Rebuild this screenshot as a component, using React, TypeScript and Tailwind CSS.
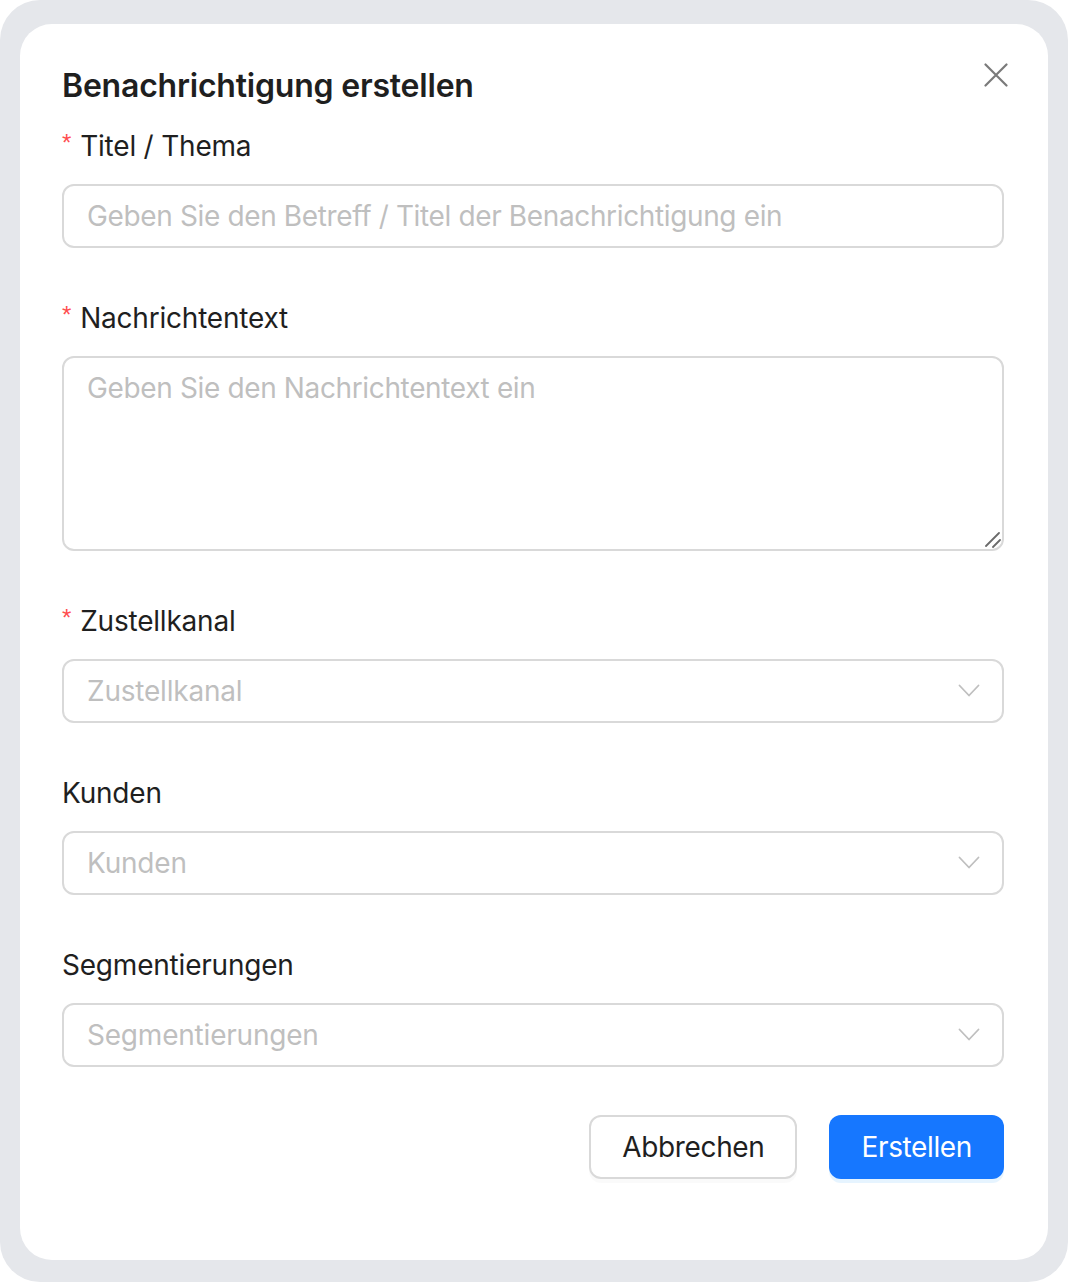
import React from "react";

const font = { fontFamily: 'Inter, "Noto Sans", "Liberation Sans", sans-serif' };

const Chevron = () => (
  <svg width="22" height="14" viewBox="0 0 22 14" fill="none" className="shrink-0">
    <path d="M1.5 1.5 L11 11.5 L20.5 1.5" stroke="#bfbfbf" strokeWidth="1.8" strokeLinecap="round" strokeLinejoin="round" />
  </svg>
);

const Label = ({ text, required }: { text: string; required?: boolean }) => (
  <div className="flex items-center h-[44px] mb-[16px] text-[28px] leading-[44px] text-[#1f1f1f]">
    {required && (
      <span className="text-[#ff4d4f] text-[24px] leading-none mr-[9px] -mt-[6px]" style={{ fontFamily: '"Liberation Sans", sans-serif' }}>
        *
      </span>
    )}
    {text}
  </div>
);

const SelectBox = ({ placeholder }: { placeholder: string }) => (
  <div className="flex items-center justify-between h-[64px] border-2 border-[#d9d9d9] rounded-[12px] pl-[23px] pr-[22px]">
    <span className="text-[28px] text-[#bfbfbf]">{placeholder}</span>
    <Chevron />
  </div>
);

export default function App() {
  return (
    <div className="w-[1068px] h-[1282px] bg-white tracking-[-0.013em]" style={font}>
      <div className="w-full h-full bg-[#e5e7eb] rounded-[40px] pl-[20px] pr-[20px] pt-[24px] pb-[22px]">
        <div className="relative h-full bg-white rounded-[32px] pl-[42px] pr-[44px] pt-[38px]">
          <button className="absolute right-[40px] top-[39px] w-[24px] h-[24px] flex items-center justify-center" aria-label="Schließen">
            <svg width="24" height="24" viewBox="0 0 24 24" fill="none">
              <path d="M1.5 1.5 L22.5 22.5 M22.5 1.5 L1.5 22.5" stroke="#7a7a7a" strokeWidth="2.2" strokeLinecap="round" />
            </svg>
          </button>

          <h1 className="text-[32px] leading-[48px] font-semibold text-[#1f1f1f]">Benachrichtigung erstellen</h1>

          <form className="mt-[14px]" onSubmit={(e) => e.preventDefault()}>
            <div className="mb-[48px]">
              <Label text="Titel / Thema" required />
              <input
                className="w-full h-[64px] border-2 border-[#d9d9d9] rounded-[12px] px-[23px] text-[28px] text-[#1f1f1f] placeholder:text-[#bfbfbf] outline-none tracking-[-0.013em]"
                placeholder="Geben Sie den Betreff / Titel der Benachrichtigung ein"
              />
            </div>

            <div className="mb-[48px]">
              <Label text="Nachrichtentext" required />
              <div className="relative">
                <textarea
                  className="block w-full h-[195px] border-2 border-[#d9d9d9] rounded-[12px] px-[23px] pt-[8px] text-[28px] leading-[44px] text-[#1f1f1f] placeholder:text-[#bfbfbf] outline-none resize-none tracking-[-0.013em]"
                  placeholder="Geben Sie den Nachrichtentext ein"
                />
                {/* resize grip */}
                <svg className="absolute right-[3px] bottom-[3px] pointer-events-none" width="17" height="17" viewBox="0 0 17 17" fill="none">
                  <path d="M2 15 L15 2 M9 16 L16 9" stroke="#6b6b6b" strokeWidth="1.8" strokeLinecap="round" />
                </svg>
              </div>
            </div>

            <div className="mb-[48px]">
              <Label text="Zustellkanal" required />
              <SelectBox placeholder="Zustellkanal" />
            </div>

            <div className="mb-[48px]">
              <Label text="Kunden" />
              <SelectBox placeholder="Kunden" />
            </div>

            <div className="mb-[48px]">
              <Label text="Segmentierungen" />
              <SelectBox placeholder="Segmentierungen" />
            </div>

            <div className="flex justify-end gap-[32px]">
              <button
                type="button"
                className="h-[64px] px-[31px] border-2 border-[#d9d9d9] rounded-[12px] bg-white text-[28px] text-[#1f1f1f] shadow-[0_4px_0_rgba(0,0,0,0.02)] tracking-[-0.013em]"
              >
                Abbrechen
              </button>
              <button
                type="submit"
                className="h-[64px] px-[32px] rounded-[12px] bg-[#1677ff] text-[28px] text-white shadow-[0_4px_0_rgba(5,145,255,0.1)] tracking-[-0.013em]"
              >
                Erstellen
              </button>
            </div>
          </form>
        </div>
      </div>
    </div>
  );
}
